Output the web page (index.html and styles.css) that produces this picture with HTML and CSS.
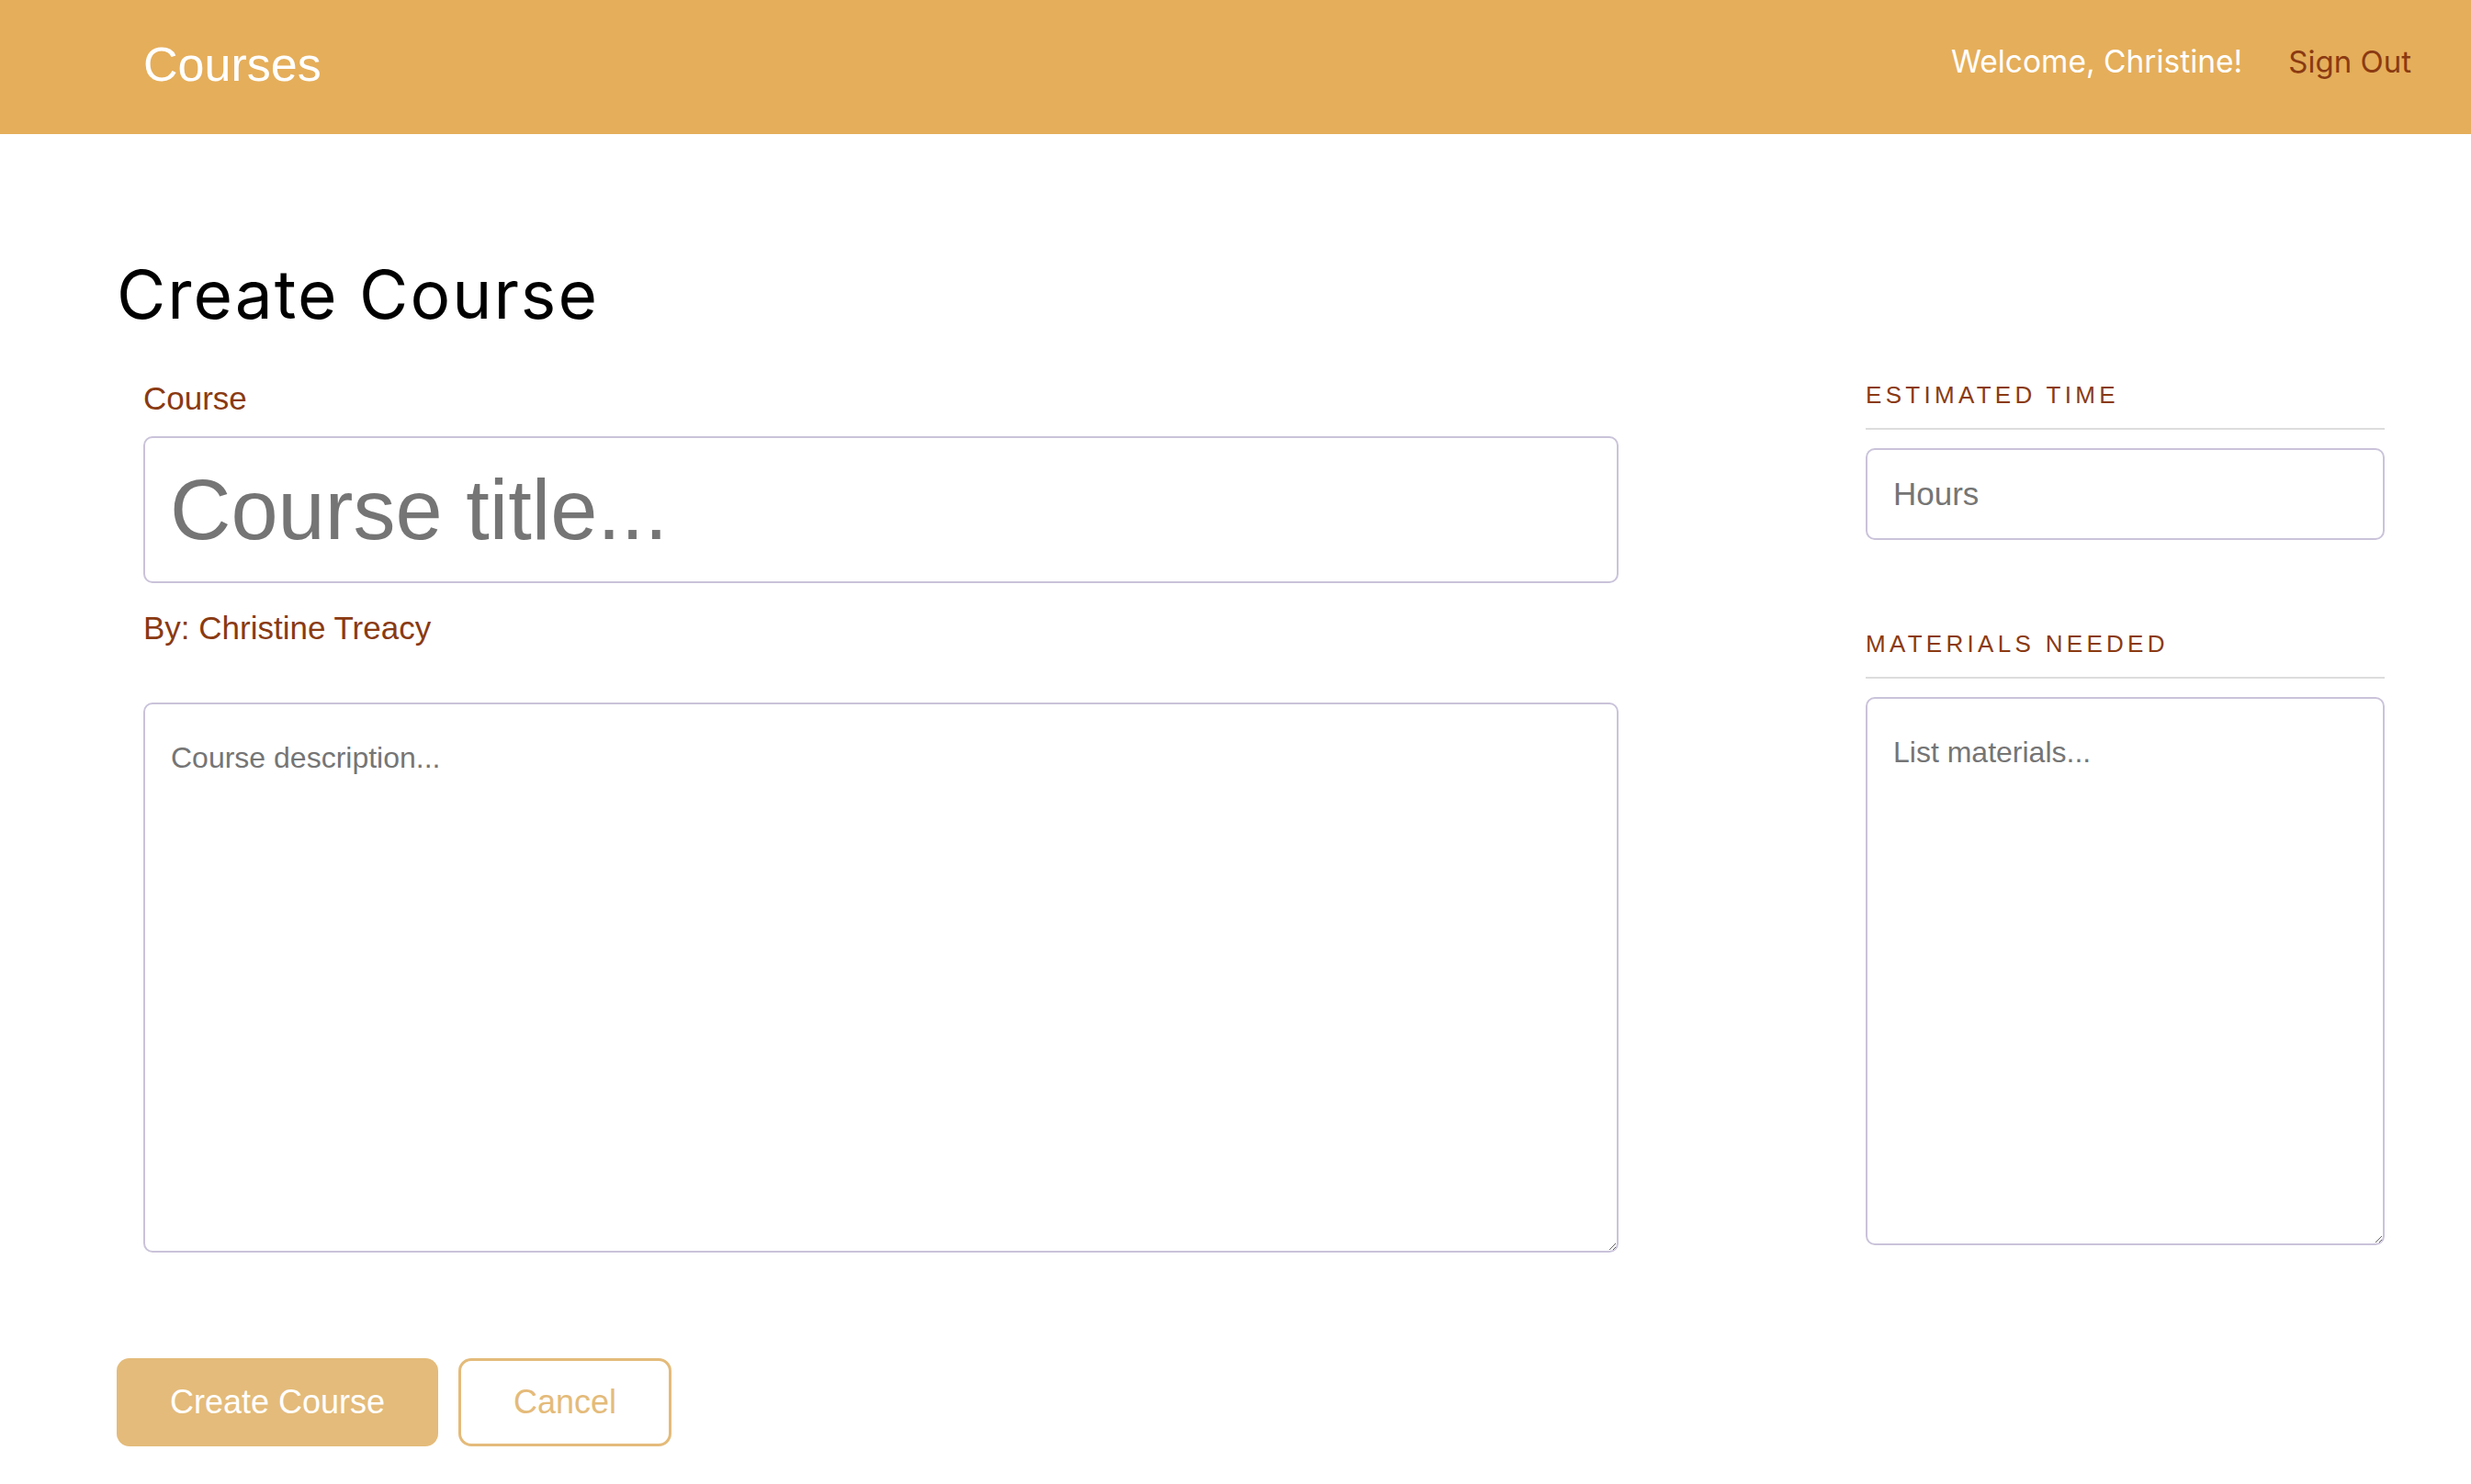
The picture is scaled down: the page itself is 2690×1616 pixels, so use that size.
FILE: index.html
```html
<!DOCTYPE html>
<html lang="en">
<head>
<meta charset="utf-8">
<title>Courses - Create Course</title>
<link rel="stylesheet" href="styles.css">
</head>
<body>
<header class="header">
  <div class="brand">Courses</div>
  <nav class="nav">
    <span class="welcome">Welcome, Christine!</span>
    <a class="signout" href="#">Sign Out</a>
  </nav>
</header>
<main class="page">
  <h1 class="title">Create Course</h1>
  <form class="form">
    <div class="columns">
      <div class="col-main">
        <label class="label">Course</label>
        <input class="input-title" type="text" placeholder="Course title...">
        <p class="byline">By: Christine Treacy</p>
        <textarea class="text-desc" placeholder="Course description..."></textarea>
      </div>
      <div class="col-side">
        <h4 class="side-label">Estimated Time</h4>
        <input class="input-hours" type="text" placeholder="Hours">
        <h4 class="side-label side-label-2">Materials Needed</h4>
        <textarea class="text-materials" placeholder="List materials..."></textarea>
      </div>
    </div>
    <div class="actions">
      <button class="btn btn-primary" type="button">Create Course</button>
      <button class="btn btn-secondary" type="button">Cancel</button>
    </div>
  </form>
</main>
</body>
</html>
```

FILE: styles.css
```css
* { box-sizing: border-box; }

html, body {
  margin: 0;
  padding: 0;
  background: #ffffff;
}

body {
  font-family: "Liberation Sans", Arial, sans-serif;
  color: #000;
}

.header {
  height: 146px;
  background: #E5AE5A;
  display: flex;
  align-items: center;
  justify-content: space-between;
  padding: 0 65px 6px 156px;
}

.brand {
  color: #fff;
  font-family: "Liberation Sans", Arial, sans-serif;
  font-size: 52px;
  line-height: 60px;
}

.nav {
  display: flex;
  align-items: center;
  gap: 50px;
  padding-bottom: 7px;
}

.welcome {
  color: #fff;
  font-family: "Inter", sans-serif;
  font-size: 33.5px;
  line-height: 40px;
}

.signout {
  color: #8A3A12;
  font-family: "Inter", sans-serif;
  font-size: 33px;
  line-height: 40px;
  text-decoration: none;
}

.page {
  padding: 131px 94px 0 127px;
}

.title {
  margin: 0;
  font-family: "Inter", sans-serif;
  font-weight: 400;
  font-size: 73px;
  letter-spacing: 2px;
  line-height: 88px;
  color: #000;
}

.form { margin: 0; }

.columns {
  display: flex;
  justify-content: space-between;
  align-items: flex-start;
}

.col-main {
  margin-left: 29px;
  width: 1606px;
  display: flex;
  flex-direction: column;
}

.label {
  display: block;
  margin-top: 49px;
  font-size: 35px;
  line-height: 40px;
  color: #8A3A12;
}

.input-title,
.input-hours,
.text-desc,
.text-materials {
  display: block;
  width: 100%;
  border: 2px solid #CAC3DA;
  border-radius: 10px;
  background: #fff;
  font-family: "Liberation Sans", Arial, sans-serif;
  color: #333;
  outline: none;
  margin: 0;
}

.input-title {
  margin-top: 21px;
  height: 160px;
  padding: 0 27px;
  font-size: 92px;
}

.byline {
  margin: 29px 0 0;
  font-size: 35px;
  line-height: 40px;
  color: #8A3A12;
}

.text-desc {
  margin-top: 61px;
  height: 599px;
  padding: 38px 28px;
  font-size: 32px;
  line-height: 40px;
  resize: vertical;
}

::placeholder {
  color: #757575;
  opacity: 1;
}

.col-side {
  width: 565px;
}

.side-label {
  margin: 49px 0 0;
  padding-bottom: 20px;
  border-bottom: 2px solid #DDDDDD;
  font-size: 26px;
  line-height: 32px;
  font-weight: 400;
  letter-spacing: 4.3px;
  text-transform: uppercase;
  color: #8A3A12;
}

.side-label-2 {
  margin-top: 97px;
}

.input-hours {
  margin-top: 20px;
  height: 100px;
  padding: 0 28px;
  font-size: 35px;
}

.text-materials {
  margin-top: 20px;
  height: 597px;
  padding: 38px 28px;
  font-size: 32px;
  line-height: 40px;
  resize: vertical;
}

.actions {
  display: flex;
  gap: 22px;
  margin-top: 115px;
}

.btn {
  height: 96px;
  border-radius: 14px;
  font-family: "Liberation Sans", Arial, sans-serif;
  font-size: 36px;
  cursor: pointer;
}

.btn-primary {
  width: 350px;
  background: #E4BB7A;
  border: 0;
  color: #fff;
}

.btn-secondary {
  width: 232px;
  background: #fff;
  border: 3px solid #E4BB7A;
  color: #E4BB7A;
}
```
